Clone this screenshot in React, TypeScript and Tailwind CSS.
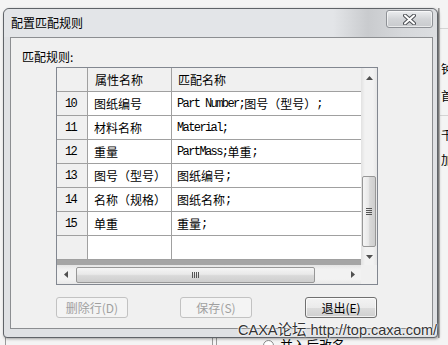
import React from "react";

type Seg = [string, boolean];
const rows: { n: string; a: string; b: Seg[] }[] = [
  { n: "10", a: "图纸编号", b: [["Part Number;", true], ["图号（型号）", false], [";", true]] },
  { n: "11", a: "材料名称", b: [["Material;", true]] },
  { n: "12", a: "重量", b: [["PartMass;", true], ["单重", false], [";", true]] },
  { n: "13", a: "图号（型号）", b: [["图纸编号", false], [";", true]] },
  { n: "14", a: "名称（规格）", b: [["图纸名称", false], [";", true]] },
  { n: "15", a: "单重", b: [["重量", false], [";", true]] },
  { n: "", a: "", b: [] },
];

const cjk = "font-['Noto_Sans_CJK_SC',sans-serif]";
const mono = "font-['Liberation_Mono','Noto_Sans_CJK_SC',monospace] text-[12px] tracking-[-1.6px]";

function Tri({ dir }: { dir: "up" | "down" | "left" | "right" }) {
  const pts =
    dir === "up"
      ? "0,4 3.5,0 7,4"
      : dir === "down"
      ? "0,0 7,0 3.5,4"
      : dir === "left"
      ? "4,0 4,7 0,3.5"
      : "0,0 0,7 4,3.5";
  const w = dir === "up" || dir === "down" ? 7 : 4;
  const h = dir === "up" || dir === "down" ? 4 : 7;
  return (
    <svg width={w} height={h} viewBox={`0 0 ${w} ${h}`}>
      <polygon points={pts} fill="#505050" />
    </svg>
  );
}

export default function App() {
  return (
    <div className={`relative w-[448px] h-[345px] overflow-hidden bg-[#f4f4f4] ${cjk}`}>
      {/* background window bits */}
      <div className="absolute left-[438px] top-[28px] w-[10px] h-px bg-[#d4d4d4]" />
      <div className="absolute left-[438px] top-[115px] w-[10px] h-px bg-[#d4d4d4]" />
      <div className="absolute left-[438px] top-[8px] w-[2px] h-[330px] bg-[linear-gradient(to_right,#8a8a8a,#d0d0d0)]" />
      <div className="absolute left-[441px] top-[62px] text-[12px] leading-[14px] text-black">钟</div>
      <div className="absolute left-[441px] top-[89px] text-[12px] leading-[14px] text-black">首</div>
      <div className="absolute left-[441px] top-[128px] text-[12px] leading-[14px] text-black">千</div>
      <div className="absolute left-[441px] top-[153px] text-[12px] leading-[14px] text-black">加</div>
      <div className="absolute left-[5px] top-[336px] w-px h-[10px] bg-[#9a9a9a]" />
      <div className="absolute left-[212px] top-[336px] w-px h-[10px] bg-[#9a9a9a]" />
      <div className="absolute left-[216px] top-[336px] w-px h-[10px] bg-[#9a9a9a]" />
      <div className="absolute left-[263px] top-[337px] flex items-center gap-[6px]">
        <div className="w-[11px] h-[11px] rounded-full border border-[#8a8a8a] bg-white" />
        <span className="text-[13px] leading-[16px] text-black">并入后改名</span>
      </div>

      {/* dialog */}
      <div className="pl-[3px] pt-[8px]">
        <div className="relative z-10 w-[435px] h-[330px] rounded-t-[6px] rounded-b-[4px] border border-[#5f6368] bg-[#dfe1e4] flex flex-col shadow-[1px_1px_3px_rgba(0,0,0,0.35)]">
          {/* title bar */}
          <div className="h-[28px] flex items-start justify-between pl-[7px] rounded-t-[6px] bg-[linear-gradient(to_right,#e3e5e8_0%,#e3e5e8_76%,#c9cbce_84%,#d6d8db_92%,#dcdee1_100%)]">
            <div className="pt-[7px] text-[12px] leading-[14px] text-black">配置匹配规则</div>
            <div className="mt-[1px] mr-[4px] w-[47px] h-[18px] rounded-[3px] border border-[#8e9196] bg-[linear-gradient(to_bottom,#eceef0,#d3d5d8_50%,#c8cacd)] shadow-[inset_0_0_0_1px_rgba(255,255,255,0.6)] flex items-center justify-center">
              <svg width="13" height="11" viewBox="0 0 13 11">
                <path d="M2 1.5 L11 9.5 M11 1.5 L2 9.5" stroke="#4c4f54" strokeWidth="4" strokeLinecap="round" />
                <path d="M2 1.5 L11 9.5 M11 1.5 L2 9.5" stroke="#ffffff" strokeWidth="2" strokeLinecap="round" />
              </svg>
            </div>
          </div>

          {/* client panel */}
          <div className="ml-[6px] w-[423px] h-[292px] border border-[#8c8e91] bg-[#f0f0f0] flex flex-col">
            <div className="pl-[11px] pt-[12px] text-[12px] leading-[14px] text-black">匹配规则:</div>

            {/* grid */}
            <div className="ml-[45px] mt-[3px] w-[322px] h-[218px] border border-[#828790] flex flex-col bg-[#f0f0f0]">
              <div className="flex h-[197px]">
                {/* table area */}
                <div className="w-[304px] h-[197px] bg-[#a5a5a5] flex flex-col">
                  {/* header */}
                  <div className="flex h-[24px] border-b border-[#a0a0a0] bg-[#f0f0f0] shrink-0">
                    <div className="w-[31px] border-r border-[#a0a0a0]" />
                    <div className="w-[84px] border-r border-[#a0a0a0] pl-[7px] flex items-center text-[12px] text-black">属性名称</div>
                    <div className="w-[189px] pl-[6px] flex items-center text-[12px] text-black">匹配名称</div>
                  </div>
                  {rows.map((r, i) => (
                    <div key={i} className="flex h-[24px] border-b border-[#a0a0a0] shrink-0">
                      <div className={`w-[31px] border-r border-[#a0a0a0] bg-[#f0f0f0] pl-[8px] flex items-center text-black ${mono}`}>{r.n}</div>
                      <div className="w-[84px] border-r border-[#a0a0a0] bg-white pl-[6px] flex items-center text-[12px] text-black whitespace-nowrap">{r.a}</div>
                      <div className="w-[189px] bg-white pl-[5px] flex items-center text-black whitespace-pre">
                        {r.b.map(([t, m], j) => (
                          <span key={j} className={m ? mono : "text-[12px]"}>{t}</span>
                        ))}
                      </div>
                    </div>
                  ))}
                </div>
                {/* vertical scrollbar */}
                <div className="w-[16px] h-[197px] flex flex-col bg-[linear-gradient(to_right,#e2e2e2,#f2f2f2_25%,#f2f2f2_75%,#e6e6e6)]">
                  <div className="h-[17px] flex items-center justify-center pt-[2px]"><Tri dir="up" /></div>
                  <div className="flex-1 flex flex-col justify-end pb-[1px] items-center">
                    <div className="w-[14px] h-[71px] rounded-[2px] border border-[#979797] bg-[linear-gradient(to_right,#f5f5f5,#e9e9e9_45%,#d9d9d9_55%,#cecece)] flex flex-col items-center justify-center gap-[1px]">
                      <div className="w-[6px] h-px bg-[#555]" />
                      <div className="w-[6px] h-px bg-[#555]" />
                      <div className="w-[6px] h-px bg-[#555]" />
                      <div className="w-[6px] h-px bg-[#555]" />
                    </div>
                  </div>
                  <div className="h-[17px] flex items-center justify-center"><Tri dir="down" /></div>
                </div>
              </div>
              <div className="flex h-[19px]">
                {/* horizontal scrollbar */}
                <div className="w-[304px] h-[19px] flex bg-[linear-gradient(to_bottom,#e4e4e4,#f2f2f2_25%,#f2f2f2_75%,#e8e8e8)]">
                  <div className="w-[17px] flex items-center justify-center"><Tri dir="left" /></div>
                  <div className="flex-1 flex items-center pl-[2px]">
                    <div className="w-[239px] h-[16px] rounded-[2px] border border-[#979797] bg-[linear-gradient(to_bottom,#f5f5f5,#e9e9e9_45%,#d9d9d9_55%,#cecece)] flex items-center justify-center gap-[1px]">
                      <div className="w-px h-[6px] bg-[#555]" />
                      <div className="w-px h-[6px] bg-[#555]" />
                      <div className="w-px h-[6px] bg-[#555]" />
                      <div className="w-px h-[6px] bg-[#555]" />
                    </div>
                  </div>
                  <div className="w-[17px] flex items-center justify-center"><Tri dir="right" /></div>
                </div>
                <div className="flex-1 bg-[#f0f0f0]" />
              </div>
            </div>

            {/* buttons */}
            <div className="ml-[45px] mt-[12px] flex">
              <div className="w-[72px] h-[21px] rounded-[3px] border border-[#c2c2c2] bg-[#f4f4f4] flex items-center justify-center text-[12px] text-[#a0a0a0]">删除行(D)</div>
              <div className="ml-[52px] w-[72px] h-[21px] rounded-[3px] border border-[#c2c2c2] bg-[#f4f4f4] flex items-center justify-center text-[12px] text-[#a0a0a0]">保存(S)</div>
              <div className="ml-[53px] w-[72px] h-[21px] rounded-[3px] border border-[#707070] bg-[linear-gradient(to_bottom,#f3f3f3,#ebebeb_50%,#dddddd_50%,#cfcfcf)] shadow-[inset_0_0_0_1px_rgba(255,255,255,0.7)] flex items-center justify-center text-[12px] text-black">退出(E)</div>
            </div>
          </div>
        </div>
      </div>

      {/* watermark */}
      <div className="absolute z-20 left-[238px] top-[321px] whitespace-nowrap font-['Liberation_Sans','Noto_Sans_CJK_SC',sans-serif] text-[14.5px] leading-[18px] text-[#333] [text-shadow:0_0_1px_#fff,0_0_2px_#fff,0_0_2px_#fff]">
        CAXA论坛 http://top.caxa.com/
      </div>
    </div>
  );
}
